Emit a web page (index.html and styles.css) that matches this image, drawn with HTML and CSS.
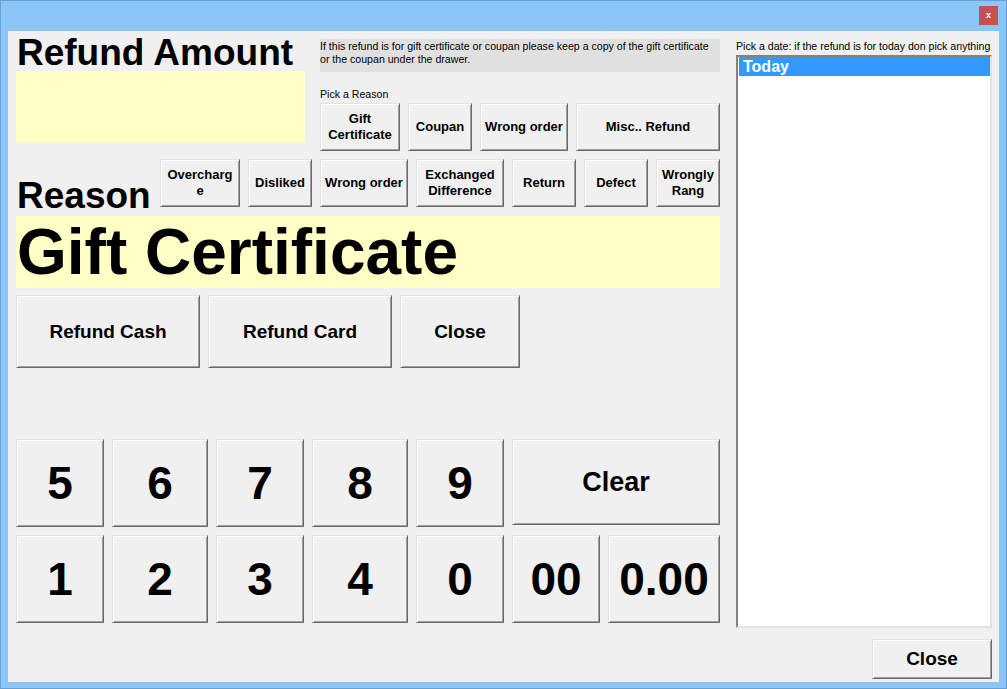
FILE: index.html
```html
<!DOCTYPE html>
<html lang="en">
<head>
    <meta charset="UTF-8">
    <title>Refund</title>
    <link rel="stylesheet" href="styles.css">
</head>
<body>

    <div class="window">
        <div class="titlebar">
            <span class="close_x">x</span>
        </div>

        <div class="client">
            <div class="left">
                <div class="top">
                    <div class="amount">
                        <h1 class="big_label">Refund Amount</h1>
                        <div class="amount_box"></div>
                    </div>
                    <div class="reasons">
                        <p class="note">If this refund is for gift certificate or coupan please keep a copy of the gift certificate<br>or the coupan under the drawer.</p>
                        <p class="small pick">Pick a Reason</p>
                        <div class="btn_row">
                            <button class="btn w80">Gift<br>Certificate</button>
                            <button class="btn w64">Coupan</button>
                            <button class="btn w88">Wrong order</button>
                            <button class="btn w144">Misc.. Refund</button>
                        </div>
                    </div>
                </div>

                <div class="reason_row">
                    <h1 class="big_label reason_label">Reason</h1>
                    <div class="btn_row">
                        <button class="btn w80">Overcharg<br>e</button>
                        <button class="btn w64">Disliked</button>
                        <button class="btn w88">Wrong order</button>
                        <button class="btn w88">Exchanged<br>Difference</button>
                        <button class="btn w64">Return</button>
                        <button class="btn w64">Defect</button>
                        <button class="btn w64">Wrongly<br>Rang</button>
                    </div>
                </div>

                <div class="reason_box">Gift Certificate</div>

                <div class="actions">
                    <button class="btn action w184">Refund Cash</button>
                    <button class="btn action w184">Refund Card</button>
                    <button class="btn action w120">Close</button>
                </div>

                <div class="keypad">
                    <button class="btn key">5</button>
                    <button class="btn key">6</button>
                    <button class="btn key">7</button>
                    <button class="btn key">8</button>
                    <button class="btn key">9</button>
                    <button class="btn key clear">Clear</button>
                    <button class="btn key">1</button>
                    <button class="btn key">2</button>
                    <button class="btn key">3</button>
                    <button class="btn key">4</button>
                    <button class="btn key">0</button>
                    <button class="btn key">00</button>
                    <button class="btn key">0.00</button>
                </div>
            </div>

            <div class="right">
                <p class="small">Pick a date: if the refund is for today don pick anything</p>
                <div class="listbox">
                    <div class="item selected">Today</div>
                </div>
                <div class="bottom">
                    <button class="btn action w120 close_btn">Close</button>
                </div>
            </div>
        </div>
    </div>

</body>
</html>
```

FILE: styles.css
```css
* {
    margin: 0px;
    padding: 0px;
    box-sizing: border-box;
}

body {
    width: 1007px;
    height: 689px;
    overflow: hidden;
    font-family: "Liberation Sans", Arial, sans-serif;
    color: #000;
}

.window {
    width: 1007px;
    height: 689px;
    background-color: #8cc6f7;
    border: 1px solid #6a9fd4;
    padding: 0px 7px 6px 7px;
    display: flex;
    flex-direction: column;
}

.titlebar {
    height: 30px;
    display: flex;
    justify-content: flex-end;
    align-items: flex-start;
    padding-top: 5px;
    margin-right: 1px;
}

.close_x {
    width: 19px;
    height: 19px;
    background-color: #c75050;
    color: #fff;
    font-size: 9px;
    font-weight: bold;
    line-height: 18px;
    text-align: center;
}

.client {
    flex: 1;
    background-color: #f0f0f0;
    display: flex;
    gap: 16px;
    padding: 0px 7px 3px 8px;
}

/* left side */
.left {
    width: 704px;
    padding-top: 4px;
}

.top {
    display: flex;
    gap: 15px;
}

.amount {
    width: 289px;
}

.big_label {
    font-size: 37px;
    line-height: 36px;
    font-weight: bold;
    white-space: nowrap;
    padding-left: 1px;
}

.amount_box {
    height: 72px;
    background-color: #ffffc6;
}

.reasons {
    width: 400px;
    margin-top: 4px;
}

.note {
    height: 33px;
    padding-top: 1px;
    background-color: #e0e0e0;
    font-size: 10.6px;
    line-height: 13px;
    white-space: nowrap;
}

.small {
    font-size: 10.6px;
    line-height: 13px;
    white-space: nowrap;
}

.pick {
    margin-top: 16px;
    margin-bottom: 2px;
}

.btn_row {
    display: flex;
    gap: 8px;
}

.btn {
    height: 48px;
    background-color: #f0f0f0;
    border: 1px solid;
    border-color: #e3e3e3 #696969 #696969 #e3e3e3;
    box-shadow: inset 1px 1px 0 #fff, inset -1px -1px 0 #a0a0a0;
    font-family: "Liberation Sans", Arial, sans-serif;
    font-size: 13px;
    line-height: 16px;
    font-weight: bold;
    color: #000;
    text-align: center;
}

.w64 { width: 64px; }
.w80 { width: 80px; }
.w88 { width: 88px; }
.w120 { width: 120px; }
.w144 { width: 144px; }
.w184 { width: 184px; }

.reason_row {
    display: flex;
    align-items: flex-end;
    margin-top: 8px;
}

.reason_label {
    width: 144px;
    margin-bottom: -7px;
}

.reason_box {
    height: 72px;
    margin-top: 9px;
    background-color: #ffffc6;
    font-size: 64px;
    line-height: 72px;
    font-weight: bold;
    padding-left: 1px;
}

.actions {
    display: flex;
    gap: 8px;
    margin-top: 7px;
}

.action {
    height: 73px;
    font-size: 19px;
    line-height: 22px;
}

.keypad {
    display: grid;
    grid-template-columns: 88px 96px 88px 96px 88px 88px 112px;
    grid-auto-rows: 88px;
    gap: 8px;
    margin-top: 71px;
}

.key {
    height: 88px;
    font-size: 46px;
    line-height: 50px;
}

.key.clear {
    grid-column: span 2;
    height: 86px;
    font-size: 27px;
}

/* right side */
.right {
    width: 256px;
    display: flex;
    flex-direction: column;
    padding-top: 9px;
}

.listbox {
    flex: 1;
    margin-top: 2px;
    background-color: #fff;
    border: 2px solid;
    border-color: #828282 #e3e3e3 #e3e3e3 #828282;
    padding: 0px 0px 0px 1px;
}

.item {
    height: 19px;
    font-size: 16px;
    line-height: 19px;
    font-weight: bold;
    padding-left: 4px;
}

.selected {
    background-color: #3399ff;
    color: #fff;
}

.bottom {
    display: flex;
    justify-content: flex-end;
    margin-top: 11px;
}

.close_btn {
    height: 40px;
}
```
